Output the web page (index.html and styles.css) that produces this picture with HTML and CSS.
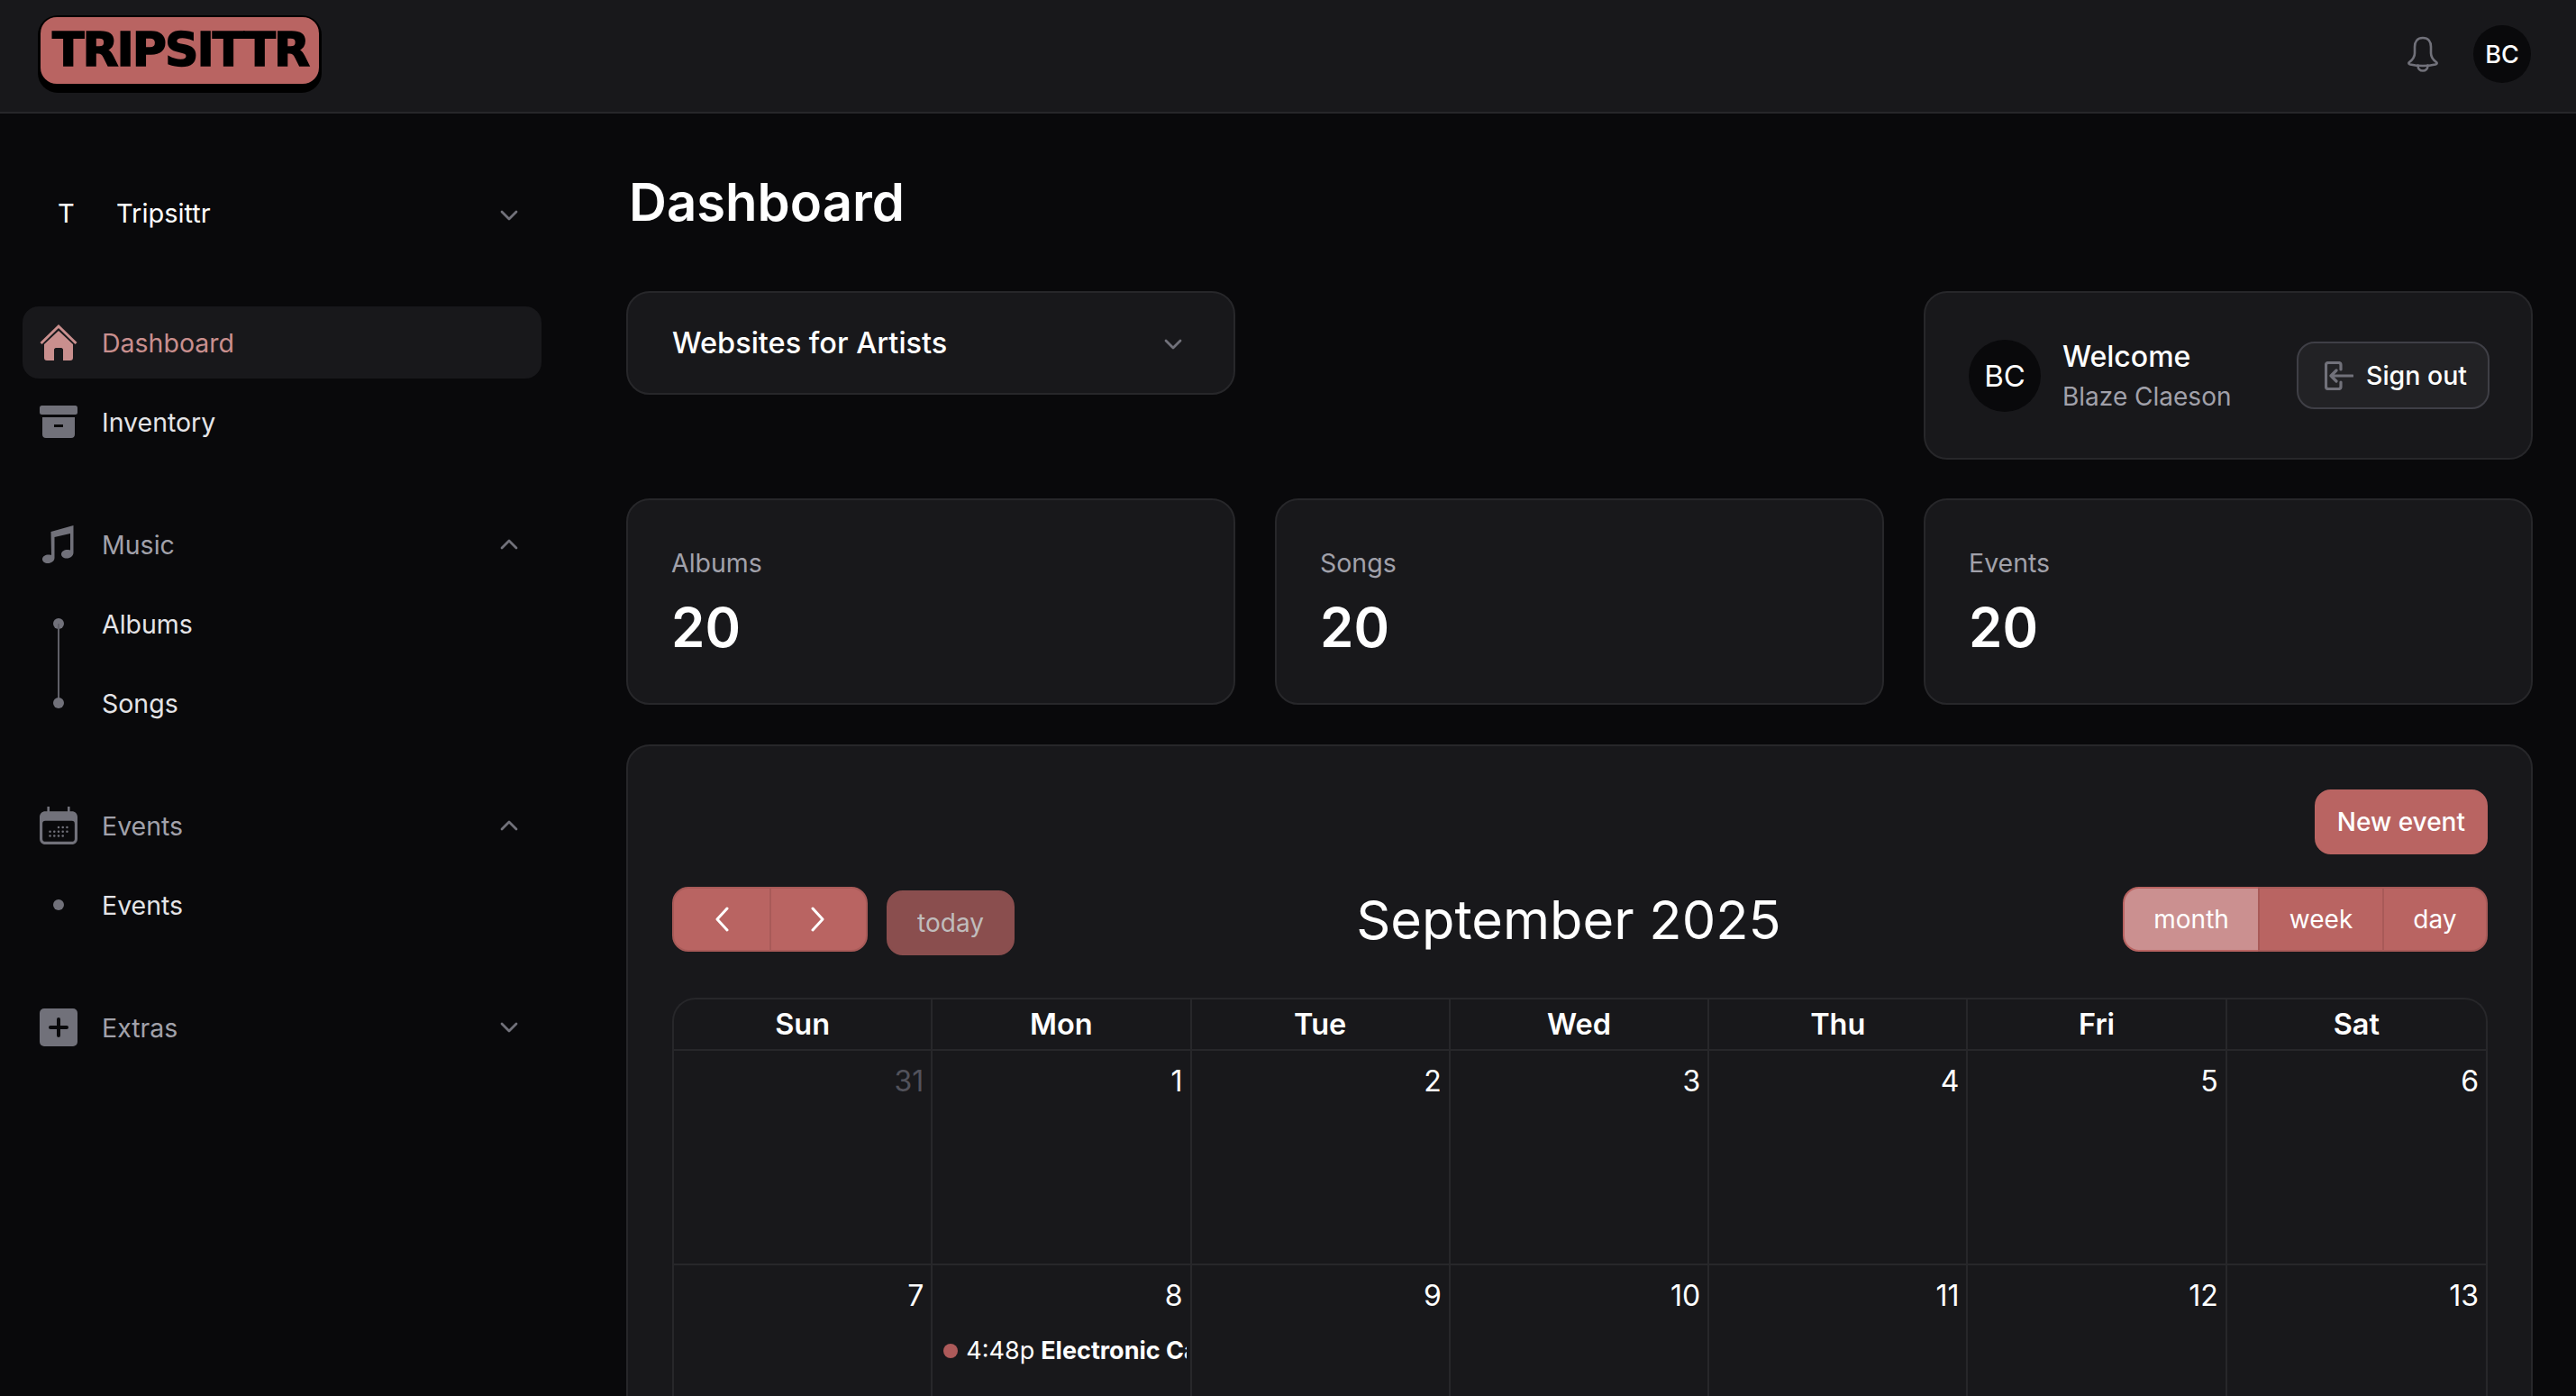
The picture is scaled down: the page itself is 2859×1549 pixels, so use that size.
FILE: index.html
```html
<!DOCTYPE html>
<html lang="en">
<head>
    <meta charset="UTF-8">
    <meta name="viewport" content="width=device-width, initial-scale=1.0">
    <title>Dashboard</title>
    <link rel="stylesheet" href="styles.css">
</head>
<body>
    <header class="topbar">
        <div class="logo"><span class="logo-text">TRIPSITTR</span></div>
        <div class="topbar-right">
            <svg class="bell" viewBox="0 0 36 40" fill="none" stroke="#71717a" stroke-width="2.6" stroke-linejoin="round" stroke-linecap="round">
                <path d="M18 2c-6 0-9 4-9 10v7c0 4-2 7-6 10-1 1-1 2 1 2.500 9 2 19 2 28 0 2-.5 2-1.500 1-2.500-4-3-6-6-6-10v-7c0-6-3-10-9-10z"/>
                <path d="M12.500 32.500c0 4 2.500 6 5.500 6s5.500-2 5.500-6"/>
            </svg>
            <div class="avatar avatar-small">BC</div>
        </div>
    </header>

    <div class="layout">
        <aside class="sidebar">
            <div class="team">
                <span class="team-letter">T</span>
                <span class="team-name">Tripsittr</span>
                <svg class="chevron" viewBox="0 0 20 12"><path d="M2 2l8 8 8-8"/></svg>
            </div>

            <nav class="nav-group">
                <a class="nav-item active">
                    <svg class="nav-icon" viewBox="0 0 42 40">
                        <path class="fill-none" d="M1.500 21L21 2l19.500 19" stroke="#c98f8e" stroke-width="3" fill="none"/>
                        <path fill="#c98f8e" d="M21 7L5 22v15c0 2 1 3 3 3h8V28c0-1 1-2 2-2h6c1 0 2 1 2 2v12h8c2 0 3-1 3-3V22z"/>
                    </svg>
                    <span>Dashboard</span>
                </a>
                <a class="nav-item">
                    <svg class="nav-icon" viewBox="0 0 42 36" fill="#71717a">
                        <rect x="0" y="0" width="42" height="10" rx="2.500"/>
                        <path fill-rule="evenodd" d="M3 13h36v19c0 2.500-1.500 4-4 4H7c-2.500 0-4-1.500-4-4zm13 8v3h10v-3z"/>
                    </svg>
                    <span>Inventory</span>
                </a>
            </nav>

            <nav class="nav-group">
                <a class="nav-item muted">
                    <svg class="nav-icon" viewBox="0 0 38 42" fill="#71717a">
                        <path d="M10.500 7L35.500 0v30c0 4-3.500 6.500-7.500 6.500-3.500 0-6-2-6-4.500 0-3 3-5 7-5 1.500 0 2.500.2 3 .5V9l-17.500 4v23c0 3.500-3.500 6-7.500 6-3.500 0-6-2-6-4.500 0-3 3-5 7-5 1.500 0 2.500.2 3 .5z"/>
                    </svg>
                    <span>Music</span>
                    <svg class="chevron" viewBox="0 0 20 12"><path d="M2 10l8-8 8 8"/></svg>
                </a>
                <div class="sub-list">
                    <a class="sub-item line-down"><i class="dot"></i><span>Albums</span></a>
                    <a class="sub-item"><i class="dot"></i><span>Songs</span></a>
                </div>
            </nav>

            <nav class="nav-group">
                <a class="nav-item muted">
                    <svg class="nav-icon" viewBox="0 0 40 40">
                        <path fill="#71717a" d="M8 0h2.500v5h19V0H32v5h2c3.500 0 6 2.500 6 6v23c0 3.500-2.500 6-6 6H6c-3.500 0-6-2.500-6-6V11c0-3.500 2.500-6 6-6h2z"/>
                        <rect x="3" y="15" width="34" height="22" rx="3" fill="#09090b"/>
                        <g fill="#71717a">
                            <circle cx="20" cy="22" r="1.200"/><circle cx="24.500" cy="22" r="1.200"/><circle cx="29" cy="22" r="1.200"/>
                            <circle cx="11" cy="26.500" r="1.200"/><circle cx="15.500" cy="26.500" r="1.200"/><circle cx="20" cy="26.500" r="1.200"/><circle cx="24.500" cy="26.500" r="1.200"/><circle cx="29" cy="26.500" r="1.200"/>
                            <circle cx="11" cy="31" r="1.200"/><circle cx="15.500" cy="31" r="1.200"/><circle cx="20" cy="31" r="1.200"/><circle cx="24.500" cy="31" r="1.200"/>
                        </g>
                    </svg>
                    <span>Events</span>
                    <svg class="chevron" viewBox="0 0 20 12"><path d="M2 10l8-8 8 8"/></svg>
                </a>
                <div class="sub-list">
                    <a class="sub-item"><i class="dot"></i><span>Events</span></a>
                </div>
            </nav>

            <nav class="nav-group">
                <a class="nav-item muted">
                    <svg class="nav-icon" viewBox="0 0 42 42">
                        <rect width="42" height="42" rx="5" fill="#71717a"/>
                        <path d="M21 12v18M12 21h18" stroke="#09090b" stroke-width="4" stroke-linecap="round"/>
                    </svg>
                    <span>Extras</span>
                    <svg class="chevron" viewBox="0 0 20 12"><path d="M2 2l8 8 8-8"/></svg>
                </a>
            </nav>
        </aside>

        <main class="main">
            <h1 class="page-title">Dashboard</h1>

            <section class="top-row">
                <div class="card site-select">
                    <span>Websites for Artists</span>
                    <svg class="chevron" viewBox="0 0 20 12"><path d="M2 2l8 8 8-8"/></svg>
                </div>
                <div></div>
                <div class="card welcome">
                    <div class="avatar avatar-large">BC</div>
                    <div class="welcome-text">
                        <div class="welcome-title">Welcome</div>
                        <div class="welcome-name">Blaze Claeson</div>
                    </div>
                    <button class="signout">
                        <svg viewBox="0 0 32 32" fill="none" stroke="#71717a" stroke-width="3.200" stroke-linecap="round" stroke-linejoin="round">
                            <path d="M18 9V4c0-1.500-1-2.500-2.500-2.500H4C2.500 1.500 1.500 2.500 1.500 4v24c0 1.500 1 2.500 2.500 2.500h11.500c1.500 0 2.500-1 2.500-2.500v-5"/>
                            <path d="M31 16H7M13 10l-6 6 6 6"/>
                        </svg>
                        <span>Sign out</span>
                    </button>
                </div>
            </section>

            <section class="stats">
                <div class="card stat"><div class="stat-label">Albums</div><div class="stat-value">20</div></div>
                <div class="card stat"><div class="stat-label">Songs</div><div class="stat-value">20</div></div>
                <div class="card stat"><div class="stat-label">Events</div><div class="stat-value">20</div></div>
            </section>

            <section class="card calendar-card">
                <div class="calendar-actions"><button class="btn new-event">New event</button></div>
                <div class="toolbar">
                    <div class="toolbar-left">
                        <div class="btn-group">
                            <button class="btn seg"><svg viewBox="0 0 16 28"><path d="M14 2L3 14l11 12"/></svg></button>
                            <button class="btn seg"><svg viewBox="0 0 16 28"><path d="M2 2l11 12L2 26"/></svg></button>
                        </div>
                        <button class="btn today">today</button>
                    </div>
                    <h2 class="cal-title">September 2025</h2>
                    <div class="btn-group views">
                        <button class="btn seg selected">month</button>
                        <button class="btn seg">week</button>
                        <button class="btn seg">day</button>
                    </div>
                </div>
                <div class="cal-grid">
                    <div class="cal-head">Sun</div>
                    <div class="cal-head">Mon</div>
                    <div class="cal-head">Tue</div>
                    <div class="cal-head">Wed</div>
                    <div class="cal-head">Thu</div>
                    <div class="cal-head">Fri</div>
                    <div class="cal-head">Sat</div>

                    <div class="cal-day other">31</div>
                    <div class="cal-day">1</div>
                    <div class="cal-day">2</div>
                    <div class="cal-day">3</div>
                    <div class="cal-day">4</div>
                    <div class="cal-day">5</div>
                    <div class="cal-day">6</div>

                    <div class="cal-day">7</div>
                    <div class="cal-day">8
                        <div class="cal-event"><i class="event-dot"></i><span class="event-time">4:48p</span><b>Electronic Cafe</b></div>
                    </div>
                    <div class="cal-day">9</div>
                    <div class="cal-day">10</div>
                    <div class="cal-day">11</div>
                    <div class="cal-day">12</div>
                    <div class="cal-day">13</div>
                </div>
            </section>
        </main>
    </div>
</body>
</html>
```

FILE: styles.css
```css
* {
    box-sizing: border-box;
}
html, body {
    height: 100%;
}
body {
    margin: 0;
    overflow: hidden;
    background-color: #09090b;
    color: #fff;
    font-family: Inter, "Noto Sans", sans-serif;
    font-size: 28.5px;
}
button {
    font-family: inherit;
    color: inherit;
}
svg {
    display: block;
}

/* top bar */
.topbar {
    height: 126px;
    padding: 17px 50px 21px 42px;
    display: flex;
    align-items: flex-start;
    justify-content: space-between;
    background-color: #18181b;
    border-bottom: 2px solid #27272a;
}
.logo {
    width: 315px;
    height: 86px;
    background-color: #000;
    border-radius: 22px;
    padding: 2px 3px 0;
}
.logo-text {
    display: block;
    height: 74px;
    line-height: 72px;
    padding-left: 13px;
    background-color: #b96462;
    border-radius: 18px;
    color: #000;
    font-family: "DejaVu Sans", sans-serif;
    font-size: 52px;
    font-weight: 700;
    letter-spacing: -2px;
    -webkit-text-stroke: 1.5px #000;
}
.topbar-right {
    display: flex;
    align-items: center;
    gap: 38px;
    margin-top: 11px;
}
.bell {
    width: 36px;
    height: 40px;
}
.avatar {
    display: flex;
    align-items: center;
    justify-content: center;
    border-radius: 50%;
    background-color: #09090b;
    font-weight: 500;
}
.avatar-small {
    width: 64px;
    height: 64px;
    font-size: 27px;
}
.avatar-large {
    width: 80px;
    height: 80px;
    font-size: 33px;
    font-weight: 400;
    flex-shrink: 0;
}

.layout {
    display: flex;
    height: calc(100% - 126px);
}

/* sidebar */
.sidebar {
    width: 650px;
    flex-shrink: 0;
    padding: 65px 49px 0 25px;
}
.team {
    height: 90px;
    display: flex;
    align-items: center;
    padding-right: 26px;
    margin-bottom: 59px;
}
.team-letter {
    width: 104px;
    padding-left: 39px;
    font-size: 29px;
}
.team-name {
    flex: 1;
    font-size: 29px;
}
.team .chevron {
    margin-top: 5px;
}
.chevron {
    width: 20px;
    height: 12px;
    flex-shrink: 0;
    fill: none;
    stroke: #71717a;
    stroke-width: 2.8;
    stroke-linecap: round;
    stroke-linejoin: round;
}
.nav-group {
    display: flex;
    flex-direction: column;
    gap: 8px;
    margin-bottom: 56px;
}
.nav-item {
    height: 80px;
    display: flex;
    align-items: center;
    gap: 27px;
    padding: 0 26px 0 19px;
    border-radius: 18px;
    color: #e4e4e7;
}
.nav-item span {
    flex: 1;
}
.nav-item.active {
    background-color: #18181b;
    color: #c98f8e;
}
.nav-item.muted {
    color: #a1a1aa;
}
.nav-icon {
    width: 42px;
    height: 42px;
    flex-shrink: 0;
}
.sub-list {
    display: flex;
    flex-direction: column;
    gap: 8px;
}
.sub-item {
    position: relative;
    height: 80px;
    display: flex;
    align-items: center;
    padding-left: 88px;
    color: #e4e4e7;
}
.dot {
    position: absolute;
    left: 34px;
    top: 34px;
    width: 12px;
    height: 12px;
    border-radius: 50%;
    background-color: #71717a;
}
.line-down::after {
    content: "";
    position: absolute;
    left: 39px;
    top: 40px;
    width: 2px;
    height: 88px;
    background-color: #5f5f68;
}

/* main column */
.main {
    flex: 1;
    min-width: 0;
    padding: 64px 48px 0 45px;
}
.page-title {
    margin: 0 0 64px 3px;
    height: 69px;
    line-height: 69px;
    font-size: 58px;
    font-weight: 600;
}
.card {
    background-color: #18181b;
    border: 2px solid #27272a;
    border-radius: 26px;
}
.top-row, .stats {
    display: grid;
    grid-template-columns: repeat(3, 1fr);
    column-gap: 44px;
}
.top-row {
    align-items: start;
    margin-bottom: 43px;
}
.site-select {
    height: 115px;
    display: flex;
    align-items: center;
    justify-content: space-between;
    padding: 0 57px 0 49px;
    font-size: 32.5px;
    font-weight: 500;
}
.site-select .chevron {
    margin-top: 3px;
}
.welcome {
    height: 187px;
    display: flex;
    align-items: center;
    padding: 0 46px 0 48px;
}
.welcome-text {
    flex: 1;
    margin-left: 24px;
    padding-top: 2px;
}
.welcome-title {
    font-size: 32px;
    font-weight: 500;
    line-height: 44px;
}
.welcome-name {
    color: #a1a1aa;
    font-size: 28px;
    line-height: 44px;
}
.signout {
    height: 75px;
    width: 214px;
    display: flex;
    align-items: center;
    gap: 14px;
    padding: 0 0 0 29px;
    background-color: #222225;
    border: 2px solid #3f3f46;
    border-radius: 20px;
    font-size: 28.5px;
    font-weight: 500;
}
.signout svg {
    width: 32px;
    height: 32px;
}
.stats {
    margin-bottom: 44px;
}
.stat {
    height: 229px;
    padding: 50px 48px 0;
}
.stat-label {
    color: #a1a1aa;
    line-height: 40px;
}
.stat-value {
    margin-top: 15px;
    font-size: 60px;
    font-weight: 600;
    line-height: 72px;
}

/* calendar */
.calendar-card {
    padding: 48px 48px 0 49px;
    height: 800px;
}
.calendar-actions {
    display: flex;
    justify-content: flex-end;
    margin-bottom: 36px;
}
.btn {
    height: 72px;
    padding: 0 23px;
    background-color: #b96462;
    border: 2px solid #b96462;
    border-radius: 18px;
    color: #fff;
    font-size: 28px;
    font-weight: 500;
}
.toolbar {
    display: flex;
    align-items: flex-start;
    justify-content: space-between;
    margin-bottom: 47px;
}
.toolbar-left {
    display: flex;
    gap: 21px;
}
.btn-group {
    display: flex;
}
.seg {
    display: flex;
    align-items: center;
    justify-content: center;
    border-radius: 0;
    border-color: #a85a58;
    font-weight: 400;
    padding: 0 32.5px;
}
.seg + .seg {
    margin-left: -2px;
}
.seg:first-child {
    border-radius: 18px 0 0 18px;
}
.seg:last-child {
    border-radius: 0 18px 18px 0;
}
.seg svg {
    width: 16px;
    height: 28px;
    fill: none;
    stroke: #fff;
    stroke-width: 3;
    stroke-linecap: round;
    stroke-linejoin: round;
}
.toolbar-left .seg {
    width: 109.5px;
    padding: 0;
}
.today {
    margin-top: 4px;
    width: 142px;
    padding: 0;
    background-color: #8a4e4e;
    border-color: #8a4e4e;
    color: #c0bcbc;
    font-weight: 400;
}
.selected {
    background-color: #cb9090;
    border-color: #b96462;
}
.cal-title {
    margin: 0;
    height: 72px;
    line-height: 72px;
    font-size: 59.5px;
    font-weight: 400;
}
.cal-grid {
    display: grid;
    grid-template-columns: repeat(7, 1fr);
    grid-template-rows: 57px 238px 238px;
    border: 2px solid #27272a;
    border-bottom: 0;
    border-radius: 26px 26px 0 0;
}
.cal-head {
    display: flex;
    align-items: center;
    justify-content: center;
    font-size: 32.5px;
    font-weight: 600;
    border-right: 2px solid #27272a;
    border-bottom: 2px solid #27272a;
}
.cal-day {
    min-width: 0;
    padding: 14px 8px 0 0;
    text-align: right;
    line-height: 40px;
    font-size: 32px;
    border-right: 2px solid #27272a;
    border-bottom: 2px solid #27272a;
    overflow: hidden;
}
.cal-head:nth-child(7n), .cal-day:nth-child(7n) {
    border-right: 0;
}
.cal-day.other {
    color: #52525b;
}
.cal-event {
    display: flex;
    align-items: center;
    margin: 21px -4px 0 12px;
    overflow: hidden;
    white-space: nowrap;
    text-align: left;
    font-size: 27px;
}
.event-dot {
    flex-shrink: 0;
    width: 16px;
    height: 16px;
    margin-right: 9px;
    border-radius: 50%;
    background-color: #ad5a5a;
}
.event-time {
    margin-right: 7px;
}
```
